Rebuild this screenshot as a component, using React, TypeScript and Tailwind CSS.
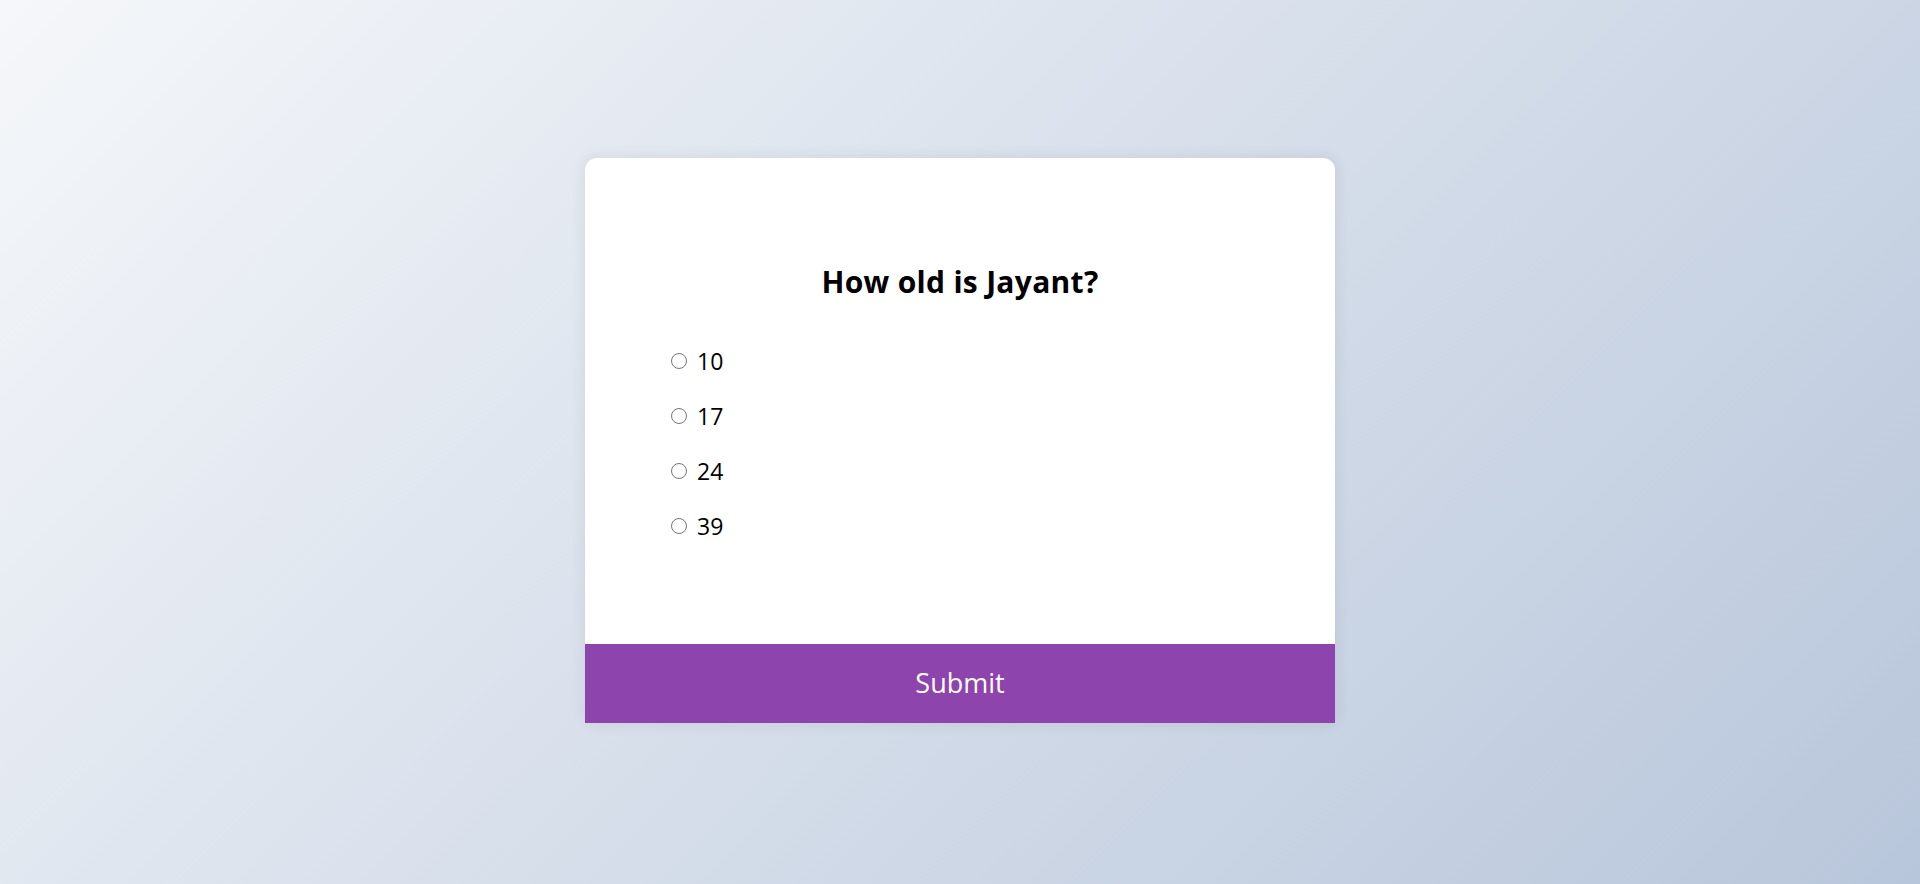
import React from "react";

export default function App() {
  const options = ["10", "17", "24", "39"];
  return (
    <div className="w-full h-[884px] flex justify-center pt-[158px] bg-[linear-gradient(315deg,#b8c6db_0%,#f5f7fa_100%)] font-['Open_Sans',sans-serif]">
      <div className="w-[750px] h-[565px] bg-white rounded-[12px] shadow-[0_0_12px_3px_rgba(100,100,100,0.1)]">
        <div className="h-[486px] pt-[103px]">
          <h2 className="text-center text-[30px] leading-[42px] font-bold text-black tracking-[0.3px]">
            How old is Jayant?
          </h2>
          <ul className="mt-[40px] pl-[86px] flex flex-col gap-[19px]">
            {options.map((o) => (
              <li key={o} className="flex items-center h-[36px] text-[23px] text-black">
                <input type="radio" name="q" className="w-[16px] h-[16px] m-0 mr-[10px]" />
                <span>{o}</span>
              </li>
            ))}
          </ul>
        </div>
        <button className="w-full h-[79px] bg-[#8e44ad] text-white text-[27px] flex items-center justify-center">
          Submit
        </button>
      </div>
    </div>
  );
}
